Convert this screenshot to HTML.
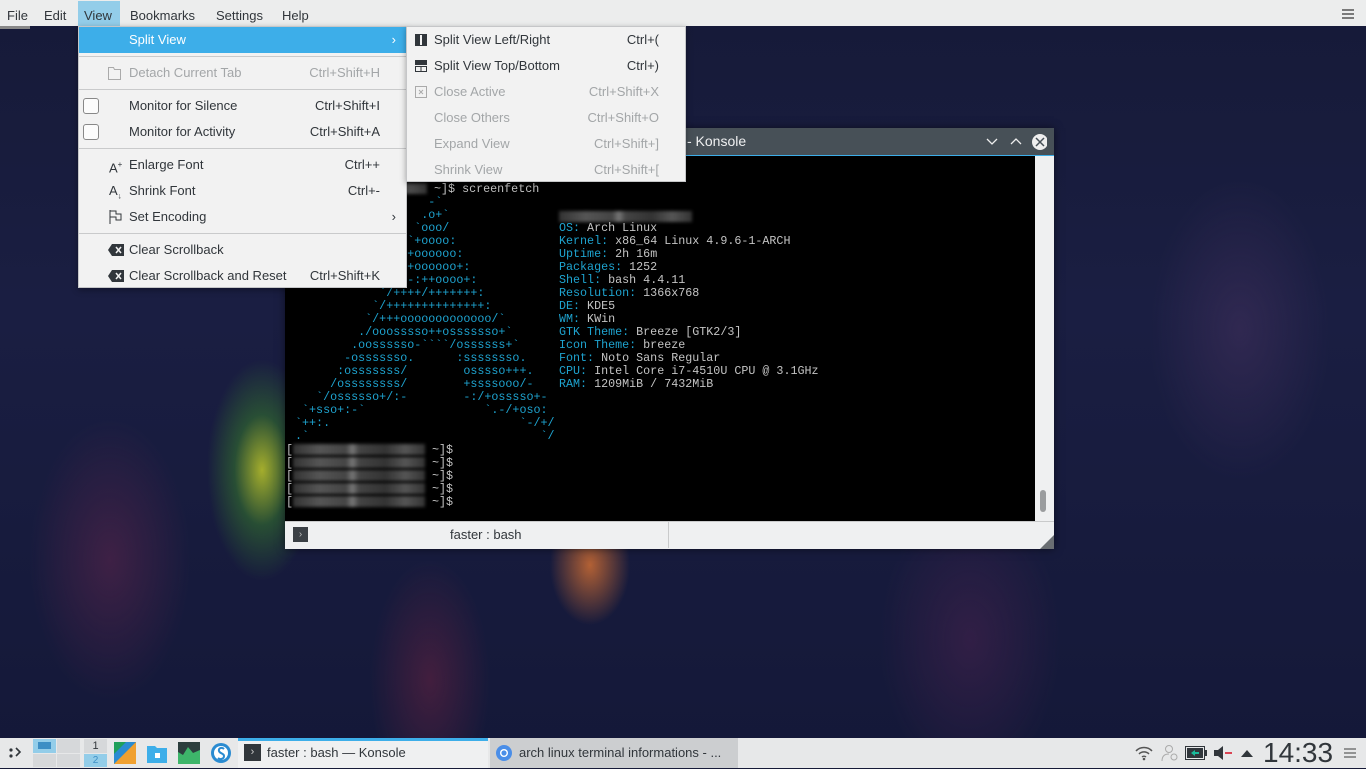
<!DOCTYPE html>
<html><head><meta charset="utf-8">
<style>
*{margin:0;padding:0;box-sizing:border-box}
body{width:1366px;height:768px;overflow:hidden;position:relative;font-family:"Liberation Sans",sans-serif;font-size:13px;color:#31363b;
background:
radial-gradient(ellipse 55px 110px at 262px 470px,rgba(200,210,40,.8),rgba(60,140,40,.45) 50%,transparent 100%),
radial-gradient(ellipse 40px 60px at 590px 565px,rgba(230,120,50,.75),transparent 100%),
radial-gradient(ellipse 80px 140px at 110px 560px,rgba(110,40,80,.45),transparent 100%),
radial-gradient(ellipse 90px 140px at 970px 640px,rgba(100,40,90,.35),transparent 100%),
radial-gradient(ellipse 90px 150px at 1240px 330px,rgba(90,60,110,.35),transparent 100%),
radial-gradient(ellipse 60px 120px at 430px 680px,rgba(150,40,70,.35),transparent 100%),
linear-gradient(180deg,#161a38 0%,#1a1e42 40%,#141838 100%);}
.abs{position:absolute}
#menubar{left:0;top:0;width:1366px;height:26px;background:#eceded}
#menubar span{position:absolute;top:0;height:26px;line-height:32px;font-size:13px;color:#31363b}
.menu{background:#f2f2f2;border:1px solid #c5c6c8;box-shadow:0 2px 6px rgba(0,0,0,.35)}
.it{position:absolute;left:0;right:0;height:26px;line-height:26px;font-size:13px}
.it .t{position:absolute;left:50px}
.it .s{position:absolute;right:26px}
.dis{color:#a3a6a8}
.sep{position:absolute;left:0;right:0;height:1px;background:#c9cacb}
pre{font-family:"Liberation Mono",monospace;font-size:11.7px;line-height:13px;margin:0}
.c{color:#1ea3cf}.g{color:#c4c4c4}
.blur{display:inline-block;width:132px;height:11px;vertical-align:middle;background:linear-gradient(90deg,#333 0,#555 20%,#444 40%,#777 45%,#444 50%,#333 70%,#555 85%,#333 100%);filter:blur(1.5px)}
#task{left:0;top:738px;width:1366px;height:30px;background:#e7e8e9}
</style></head><body>

<div class="abs" style="left:285px;top:128px;width:769px;height:421px;background:#eff0f1;box-shadow:0 0 8px rgba(0,0,0,.5)">
 <div class="abs" style="left:0;top:0;width:769px;height:27px;background:#475057"></div>
 <div class="abs" style="left:0;top:27px;width:769px;height:1px;background:#3daee9"></div>
 <div class="abs" style="left:402px;top:5px;color:#eff0f1;font-size:14px">- Konsole</div>
 <svg class="abs" style="left:700px;top:5px" width="62" height="18"><path d="M2 6l5 5 5-5" stroke="#eee" fill="none" stroke-width="1.3"/><path d="M26 11l5-5 5 5" stroke="#eee" fill="none" stroke-width="1.3"/><circle cx="55" cy="9" r="8" fill="#eee"/><path d="M51 5l8 8M59 5l-8 8" stroke="#475057" stroke-width="1.5"/></svg>
 <div class="abs" style="left:0;top:28px;width:750px;height:365px;background:#000"></div>
 <div class="abs" style="left:755px;top:362px;width:6px;height:22px;border-radius:3px;background:#9a9c9e"></div>
 <div class="abs" style="left:0;top:393px;width:384px;height:27px;background:#eff0f1;border-top:1px solid #c9cacb;border-right:1px solid #c9cacb"></div>
 <div class="abs" style="left:384px;top:393px;width:385px;height:1px;background:#c9cacb"></div>
 <div class="abs" style="left:8px;top:399px;width:15px;height:15px;background:#3b4045;color:#bbb;font-size:10px;line-height:15px;text-align:center">›</div>
 <div class="abs" style="left:165px;top:399px;font-size:13px;color:#31363b">faster : bash</div>
 <svg class="abs" style="left:755px;top:407px" width="14" height="14"><path d="M14 0V14H0z" fill="#6a6e72"/></svg>
</div>

<pre class="abs g" style="left:288px;top:183px">[<span class="blur"></span> ~]$ screenfetch</pre>
<pre class="abs c" style="left:288px;top:196px">                    -&#96;
                   .o+&#96;
                  &#96;ooo/
                 &#96;+oooo:
                &#96;+oooooo:
                -+oooooo+:
              &#96;/:-:++oooo+:
             &#96;/++++/+++++++:
            &#96;/++++++++++++++:
           &#96;/+++ooooooooooooo/&#96;
          ./ooosssso++osssssso+&#96;
         .oossssso-&#96;&#96;&#96;&#96;/ossssss+&#96;
        -osssssso.      :ssssssso.
       :osssssss/        osssso+++.
      /ossssssss/        +ssssooo/-
    &#96;/ossssso+/:-        -:/+osssso+-
  &#96;+sso+:-&#96;                 &#96;.-/+oso:
 &#96;++:.                           &#96;-/+/
 .&#96;                                 &#96;/</pre>
<div class="abs blur" style="left:559px;top:211px;width:133px"></div>
<pre class="abs g" style="left:559px;top:222px"><span class="c">OS:</span> Arch Linux
<span class="c">Kernel:</span> x86_64 Linux 4.9.6-1-ARCH
<span class="c">Uptime:</span> 2h 16m
<span class="c">Packages:</span> 1252
<span class="c">Shell:</span> bash 4.4.11
<span class="c">Resolution:</span> 1366x768
<span class="c">DE:</span> KDE5
<span class="c">WM:</span> KWin
<span class="c">GTK Theme:</span> Breeze [GTK2/3]
<span class="c">Icon Theme:</span> breeze
<span class="c">Font:</span> Noto Sans Regular
<span class="c">CPU:</span> Intel Core i7-4510U CPU @ 3.1GHz
<span class="c">RAM:</span> 1209MiB / 7432MiB</pre>
<pre class="abs g" style="left:286px;top:444px">[<span class="blur"></span> ~]$
[<span class="blur"></span> ~]$
[<span class="blur"></span> ~]$
[<span class="blur"></span> ~]$
[<span class="blur"></span> ~]$</pre>

<div id="menubar" class="abs">
 <div class="abs" style="left:78px;top:1px;width:42px;height:25px;background:#93cde9"></div>
 <span style="left:7px">File</span><span style="left:44px">Edit</span><span style="left:84px">View</span>
 <span style="left:130px">Bookmarks</span><span style="left:216px">Settings</span><span style="left:282px">Help</span>
 <svg class="abs" style="left:1342px;top:9px" width="12" height="10"><path d="M0 1h12M0 5h12M0 9h12" stroke="#555" stroke-width="1.5"/></svg>
</div>
<div class="abs" style="left:0;top:26px;width:30px;height:3px;background:#888"></div>

<div class="abs menu" style="left:78px;top:26px;width:329px;height:262px">
 <div class="it" style="top:0;background:#3daee9;color:#fff"><span class="t">Split View</span><span class="s" style="right:10px">›</span></div>
 <div class="sep" style="top:29px"></div>
 <div class="it dis" style="top:33px"><svg class="abs" style="left:29px;top:7px" width="13" height="13"><path d="M.5 .5h5l1 2h6v10H.5z" fill="none" stroke="#aaa"/></svg><span class="t">Detach Current Tab</span><span class="s">Ctrl+Shift+H</span></div>
 <div class="sep" style="top:62px"></div>
 <div class="it" style="top:66px"><div class="abs" style="left:4px;top:5px;width:16px;height:16px;border:1px solid #888;border-radius:3px;background:#fcfcfc"></div><span class="t">Monitor for Silence</span><span class="s">Ctrl+Shift+I</span></div>
 <div class="it" style="top:92px"><div class="abs" style="left:4px;top:5px;width:16px;height:16px;border:1px solid #888;border-radius:3px;background:#fcfcfc"></div><span class="t">Monitor for Activity</span><span class="s">Ctrl+Shift+A</span></div>
 <div class="sep" style="top:121px"></div>
 <div class="it" style="top:125px"><span class="abs" style="left:30px;font-size:13px">A<sup style="font-size:8px">+</sup></span><span class="t">Enlarge Font</span><span class="s">Ctrl++</span></div>
 <div class="it" style="top:151px"><span class="abs" style="left:30px;font-size:13px">A<sub style="font-size:8px">↓</sub></span><span class="t">Shrink Font</span><span class="s">Ctrl+-</span></div>
 <div class="it" style="top:177px"><svg class="abs" style="left:30px;top:6px" width="13" height="14"><path d="M1 0v14M1 1h6v3h5v6H7V7H1" fill="none" stroke="#31363b"/></svg><span class="t">Set Encoding</span><span class="s" style="right:10px">›</span></div>
 <div class="sep" style="top:206px"></div>
 <div class="it" style="top:210px"><svg class="abs" style="left:29px;top:7px" width="16" height="12"><path d="M4 0h12v12H4L0 6z" fill="#31363b"/><path d="M8 3l5 6M13 3l-5 6" stroke="#f2f2f2" stroke-width="1.5"/></svg><span class="t">Clear Scrollback</span></div>
 <div class="it" style="top:236px"><svg class="abs" style="left:29px;top:7px" width="16" height="12"><path d="M4 0h12v12H4L0 6z" fill="#31363b"/><path d="M8 3l5 6M13 3l-5 6" stroke="#f2f2f2" stroke-width="1.5"/></svg><span class="t">Clear Scrollback and Reset</span><span class="s">Ctrl+Shift+K</span></div>
</div>

<div class="abs menu" style="left:406px;top:26px;width:280px;height:156px">
 <div class="it" style="top:0"><svg class="abs" style="left:8px;top:7px" width="12" height="12"><rect x=".5" y=".5" width="11" height="11" fill="none" stroke="#31363b"/><rect x="1" y="1" width="4" height="10" fill="#31363b"/><rect x="7" y="1" width="4" height="10" fill="#31363b"/></svg><span class="t" style="left:27px">Split View Left/Right</span><span class="s">Ctrl+(</span></div>
 <div class="it" style="top:26px"><svg class="abs" style="left:8px;top:7px" width="12" height="12"><rect x="0" y="0" width="12" height="5" fill="#31363b"/><rect x=".5" y="6.5" width="11" height="5" fill="none" stroke="#31363b"/><path d="M6 7v5" stroke="#31363b"/></svg><span class="t" style="left:27px">Split View Top/Bottom</span><span class="s">Ctrl+)</span></div>
 <div class="it dis" style="top:52px"><svg class="abs" style="left:8px;top:7px" width="12" height="12"><rect x=".5" y=".5" width="11" height="11" fill="none" stroke="#aaa"/><path d="M4 4l4 4M8 4l-4 4" stroke="#aaa"/></svg><span class="t" style="left:27px">Close Active</span><span class="s">Ctrl+Shift+X</span></div>
 <div class="it dis" style="top:78px"><span class="t" style="left:27px">Close Others</span><span class="s">Ctrl+Shift+O</span></div>
 <div class="it dis" style="top:104px"><span class="t" style="left:27px">Expand View</span><span class="s">Ctrl+Shift+]</span></div>
 <div class="it dis" style="top:130px"><span class="t" style="left:27px">Shrink View</span><span class="s">Ctrl+Shift+[</span></div>
</div>

<div id="task" class="abs">
 <svg class="abs" style="left:8px;top:7px" width="14" height="16"><circle cx="3" cy="5" r="1.6" fill="#31363b"/><circle cx="3" cy="11" r="1.6" fill="#31363b"/><path d="M8 3l4 4-4 4" fill="none" stroke="#31363b" stroke-width="1.6"/></svg>
 <div class="abs" style="left:33px;top:1px;width:23px;height:14px;background:#93cde9"><div style="margin:3px 5px;width:13px;height:7px;background:#3d8fc5"></div></div>
 <div class="abs" style="left:57px;top:1px;width:23px;height:14px;background:#d6d8da"></div>
 <div class="abs" style="left:33px;top:16px;width:23px;height:13px;background:#d6d8da"></div>
 <div class="abs" style="left:57px;top:16px;width:23px;height:13px;background:#d6d8da"></div>
 <div class="abs" style="left:84px;top:1px;width:23px;height:14px;background:#d6d8da;font-size:11px;text-align:center;line-height:14px">1</div>
 <div class="abs" style="left:84px;top:16px;width:23px;height:13px;background:#93cde9;font-size:10px;text-align:center;line-height:13px;color:#3d8fc5">2</div>
 <svg class="abs" style="left:114px;top:4px" width="22" height="22"><rect width="22" height="22" fill="#2a8bd1"/><path d="M0 22L22 0v22z" fill="#f0a030"/><path d="M0 0h12L0 12z" fill="#1fa05a"/></svg>
 <svg class="abs" style="left:146px;top:4px" width="22" height="22"><path d="M1 4h8l2 2h10v15H1z" fill="#3daee9"/><rect x="9" y="11" width="5" height="5" fill="#fff"/></svg>
 <svg class="abs" style="left:178px;top:4px" width="22" height="22"><rect width="22" height="22" fill="#2c3e3e"/><path d="M0 22V10l5 3 5-8 5 6 7-3v14z" fill="#3db56a"/></svg>
 <svg class="abs" style="left:210px;top:4px" width="22" height="22"><circle cx="11" cy="11" r="10" fill="#2a8bd1"/><circle cx="11" cy="11" r="7" fill="#fff"/><path d="M14 7c-2-2-6-1-5 2s5 2 5 5-4 4-6 2" stroke="#2a8bd1" stroke-width="2" fill="none"/></svg>
 <div class="abs" style="left:238px;top:0;width:250px;height:30px;background:#eff0f1;border-top:3px solid #3daee9"></div>
 <div class="abs" style="left:244px;top:6px;width:17px;height:17px;background:#31363b;color:#ccc;font-size:11px;text-align:center;line-height:17px">›</div>
 <div class="abs" style="left:267px;top:7px;font-size:13px">faster : bash — Konsole</div>
 <div class="abs" style="left:490px;top:0;width:248px;height:30px;background:#ccced0"></div>
 <svg class="abs" style="left:495px;top:6px" width="18" height="18"><circle cx="9" cy="9" r="8" fill="#4a8ee8"/><circle cx="9" cy="9" r="4" fill="#fff"/><circle cx="9" cy="9" r="2.6" fill="#4a8ee8"/></svg>
 <div class="abs" style="left:519px;top:7px;font-size:13px">arch linux terminal informations - ...</div>
 <svg class="abs" style="left:1134px;top:7px" width="20" height="16"><path d="M2 6a11 11 0 0 1 16 0M5 9a7 7 0 0 1 10 0M8 12a3 3 0 0 1 4 0" stroke="#555" fill="none" stroke-width="1.5"/><circle cx="10" cy="14" r="1.3" fill="#555"/></svg>
 <svg class="abs" style="left:1161px;top:6px" width="18" height="18"><circle cx="8" cy="5" r="3.5" fill="none" stroke="#aaa"/><path d="M1 17c0-5 3-7 7-7" fill="none" stroke="#aaa"/><circle cx="13" cy="13" r="3" fill="none" stroke="#aaa"/></svg>
 <svg class="abs" style="left:1185px;top:8px" width="22" height="14"><rect x=".5" y=".5" width="19" height="13" fill="none" stroke="#31363b"/><rect x="20" y="4" width="2" height="6" fill="#31363b"/><rect x="2" y="2" width="16" height="10" fill="#31363b"/><path d="M6 7l4-3v2h4v2h-4v2z" fill="#1abc9c"/></svg>
 <svg class="abs" style="left:1213px;top:7px" width="20" height="16"><path d="M1 5h4l5-4v14l-5-4H1z" fill="#31363b"/><path d="M12 8h7" stroke="#da4453" stroke-width="2"/></svg>
 <svg class="abs" style="left:1241px;top:11px" width="12" height="8"><path d="M0 8L6 1l6 7z" fill="#31363b"/></svg>
 <div class="abs" style="left:1263px;top:-1px;font-size:28px;color:#31363b">14:33</div>
 <svg class="abs" style="left:1344px;top:10px" width="12" height="10"><path d="M0 1h12M0 5h12M0 9h12" stroke="#777" stroke-width="1.5"/></svg>
</div>
</body></html>
